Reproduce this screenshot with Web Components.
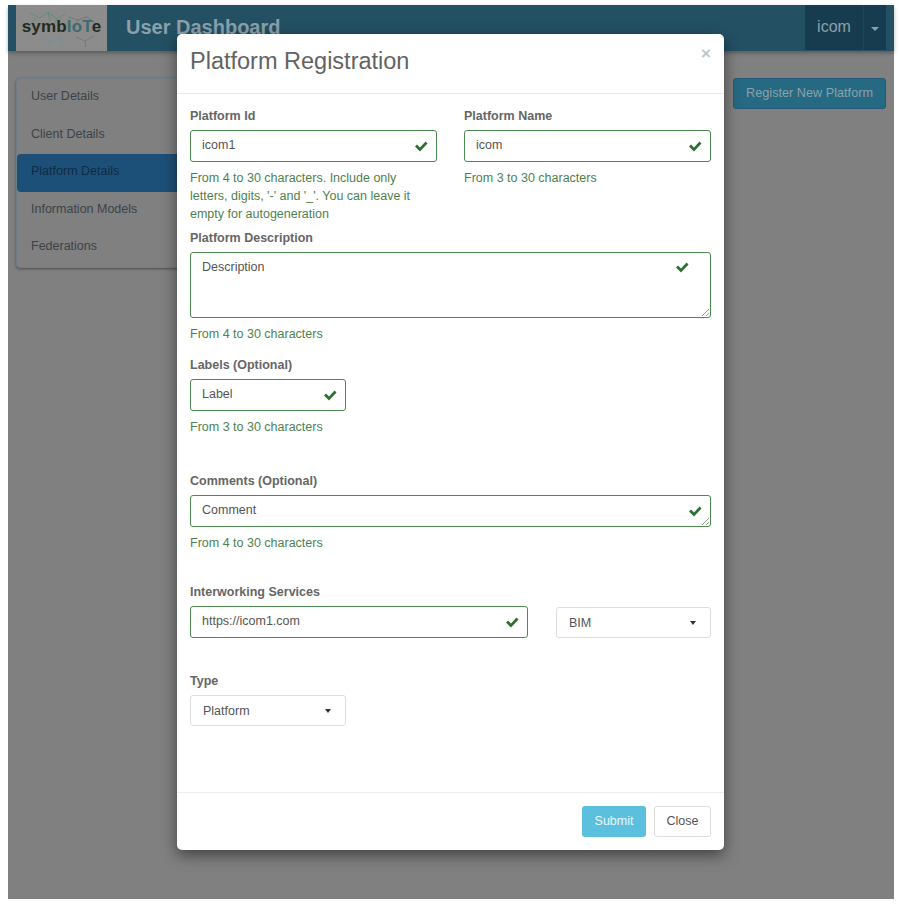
<!DOCTYPE html>
<html>
<head>
<meta charset="utf-8">
<style>
    html, body { margin: 0; padding: 0; background: #fff; }
    body { font-family: "Liberation Sans", Arial, sans-serif; }
</style>
</head>
<body>
<app-shell>
    <top-bar></top-bar>
    <div style="display:flex;justify-content:space-between;align-items:flex-start;padding:27px 8px 0 8px">
        <side-menu>
            <menu-link>User Details</menu-link>
            <menu-link>Client Details</menu-link>
            <menu-link active>Platform Details</menu-link>
            <menu-link>Information Models</menu-link>
            <menu-link>Federations</menu-link>
        </side-menu>
        <register-button>Register New Platform</register-button>
    </div>
    <platform-modal slot="modal">
        <div class="row" style="display:flex;gap:27px;height:122px">
            <form-field label="Platform Id" value="icom1" style="width:247px" help="From 4 to 30 characters. Include only letters, digits, '-' and '_'. You can leave it empty for autogeneration"></form-field>
            <form-field label="Platform Name" value="icom" style="width:247px" help="From 3 to 30 characters"></form-field>
        </div>
        <form-field label="Platform Description" value="Description" multiline height="66" grip help="From 4 to 30 characters" style="margin-bottom:13px"></form-field>
        <form-field label="Labels (Optional)" value="Label" style="width:156px;margin-bottom:36px" help="From 3 to 30 characters"></form-field>
        <form-field label="Comments (Optional)" value="Comment" grip help="From 4 to 30 characters" style="margin-bottom:31px"></form-field>
        <div style="display:flex;gap:28px;align-items:flex-end;margin-bottom:34px">
            <form-field label="Interworking Services" value="https://icom1.com" style="width:338px"></form-field>
            <select-box style="width:155px">BIM</select-box>
        </div>
        <form-field label="Type" style="width:156px">
            <select-box>Platform</select-box>
        </form-field>
    </platform-modal>
</app-shell>

<script>
const shellTemplate = document.createElement("template");
shellTemplate.innerHTML = `
    <style>
        :host {
            display: block;
            position: relative;
            margin: 5px 6px 0 8px;
            height: 894px;
            background: #808080;
        }
    </style>
    <slot></slot>
    <slot name="modal"></slot>
`;
class AppShell extends HTMLElement {
    constructor() {
        super();
        this.attachShadow({ mode: "open" });
        this.shadowRoot.appendChild(shellTemplate.content.cloneNode(true));
    }
}
customElements.define("app-shell", AppShell);

const barTemplate = document.createElement("template");
barTemplate.innerHTML = `
    <style>
        :host {
            display: flex;
            align-items: stretch;
            height: 46px;
            background: #245064;
            box-shadow: 0 2px 4px rgba(0,0,0,.3);
            padding: 0 8px;
        }
        .logo {
            width: 91px;
            background: #8c8c8c;
            display: flex;
            align-items: center;
            justify-content: center;
            position: relative;
            overflow: hidden;
        }
        .logo svg { position: absolute; left: 0; top: 0; }
        .logo b {
            position: relative;
            font-size: 17px;
            letter-spacing: .2px;
            color: #232a20;
            margin-top: -3px;
        }
        .logo b span { color: #3f6a70; }
        h1 {
            margin: 0 0 0 19px;
            font-size: 20px;
            line-height: 44px;
            font-weight: bold;
            color: #8aa1ac;
            flex: 1;
        }
        .user {
            display: flex;
            height: 45px;
            color: #8aa1ac;
            background: #183c4f;
        }
        .name {
            width: 58px;
            text-align: center;
            line-height: 43px;
            font-size: 16px;
            border-right: 1px solid #204558;
        }
        .caret {
            width: 22px;
            display: flex;
            align-items: center;
            justify-content: center;
        }
        .caret i {
            border-top: 4px solid #8aa1ac;
            border-left: 4px solid transparent;
            border-right: 4px solid transparent;
            margin-top: 2px;
        }
    </style>
    <div class="logo">
        <svg width="91" height="46" viewBox="0 0 91 46" fill="none" stroke-width="1">
            <g stroke="#5f8f6f"><path d="M14 8l10 5 8-6 9 7 8-5M20 13l-6 7M32 7l2 9M41 14l-3 6"/></g>
            <g stroke="#6f8fa0"><path d="M26 33l9 4 8-5 7 5M35 37l-2 6M43 32l3 8"/></g>
            <g stroke="#777"><path d="M52 12l10 3 9-3 8 6M62 15l-3 7M60 32l9 4 9-5M69 36l1 6"/></g>
        </svg>
        <b>symb<span>IoT</span>e</b>
    </div>
    <h1>User Dashboard</h1>
    <div class="user">
        <div class="name">icom</div>
        <div class="caret"><i></i></div>
    </div>
`;
class TopBar extends HTMLElement {
    constructor() {
        super();
        this.attachShadow({ mode: "open" });
        this.shadowRoot.appendChild(barTemplate.content.cloneNode(true));
    }
}
customElements.define("top-bar", TopBar);

const menuTemplate = document.createElement("template");
menuTemplate.innerHTML = `
    <style>
        :host {
            display: block;
            width: 240px;
            background: #808080;
            border: 1px solid #6d7e88;
            border-radius: 4px;
            box-shadow: 0 1px 3px rgba(0,0,0,.4);
            padding: 0;
        }
    </style>
    <slot></slot>
`;
class SideMenu extends HTMLElement {
    constructor() {
        super();
        this.attachShadow({ mode: "open" });
        this.shadowRoot.appendChild(menuTemplate.content.cloneNode(true));
    }
}
customElements.define("side-menu", SideMenu);

const linkTemplate = document.createElement("template");
linkTemplate.innerHTML = `
    <style>
        :host {
            display: block;
            height: 37.6px;
            line-height: 35px;
            padding-left: 14px;
            font-size: 12.5px;
            color: #3c4347;
            border-radius: 4px;
        }
        :host([active]) {
            background: #1d5079;
            color: #0f2c42;
        }
    </style>
    <slot></slot>
`;
class MenuLink extends HTMLElement {
    constructor() {
        super();
        this.attachShadow({ mode: "open" });
        this.shadowRoot.appendChild(linkTemplate.content.cloneNode(true));
    }
}
customElements.define("menu-link", MenuLink);

const registerTemplate = document.createElement("template");
registerTemplate.innerHTML = `
    <style>
        :host {
            display: block;
            height: 29px;
            margin-right: 0;
            padding: 0 12px;
            line-height: 29px;
            font-size: 12.7px;
            color: #8aa1ac;
            background: #256a82;
            border: 1px solid #24587a;
            border-radius: 3px;
        }
    </style>
    <slot></slot>
`;
class RegisterButton extends HTMLElement {
    constructor() {
        super();
        this.attachShadow({ mode: "open" });
        this.shadowRoot.appendChild(registerTemplate.content.cloneNode(true));
    }
}
customElements.define("register-button", RegisterButton);

const modalTemplate = document.createElement("template");
modalTemplate.innerHTML = `
    <style>
        :host {
            display: flex;
            flex-direction: column;
            position: absolute;
            left: 169px;
            top: 29px;
            width: 547px;
            height: 816px;
            background: #fff;
            border-radius: 5px;
            box-shadow: 0 5px 15px rgba(0,0,0,.5);
            color: #555;
        }
        header {
            position: relative;
            height: 59px;
            border-bottom: 1px solid #e9e9e9;
            padding-left: 13px;
        }
        h2 {
            margin: 0;
            font-size: 23.5px;
            font-weight: normal;
            line-height: 55px;
            color: #636363;
        }
        .x {
            position: absolute;
            right: 13px;
            top: 10px;
            font-size: 17px;
            font-weight: bold;
            color: #c4c4c4;
        }
        main {
            flex: 1;
            padding: 13px 13px 0 13px;
        }
        footer {
            height: 57px;
            border-top: 1px solid #eee;
            display: flex;
            justify-content: flex-end;
            align-items: center;
            gap: 8px;
            padding: 0 13px;
        }
        .btn {
            height: 29px;
            line-height: 29px;
            border-radius: 3px;
            font-size: 12.5px;
            text-align: center;
            box-sizing: content-box;
        }
        .submit { width: 64px; height: 31px; line-height: 31px; background: #5bc0de; color: #e9f7fb; }
        .close { width: 55px; color: #555; border: 1px solid #ddd; }
    </style>
    <header>
        <h2>Platform Registration</h2>
        <span class="x">×</span>
    </header>
    <main><slot></slot></main>
    <footer>
        <span class="btn submit">Submit</span>
        <span class="btn close">Close</span>
    </footer>
`;
class PlatformModal extends HTMLElement {
    constructor() {
        super();
        this.attachShadow({ mode: "open" });
        this.shadowRoot.appendChild(modalTemplate.content.cloneNode(true));
    }
}
customElements.define("platform-modal", PlatformModal);

const fieldTemplate = document.createElement("template");
fieldTemplate.innerHTML = `
    <style>
        :host {
            display: block;
            font-size: 12.5px;
        }
        label {
            display: block;
            font-weight: bold;
            color: #666;
            line-height: 18px;
            margin-bottom: 5px;
        }
        .input {
            position: relative;
            box-sizing: border-box;
            height: 32px;
            border: 1px solid #4d8a4f;
            border-radius: 3px;
            padding: 0 11px;
            line-height: 29px;
            color: #555;
            background: #fff;
        }
        .input svg.ok {
            position: absolute;
            right: 8px;
            top: 9px;
        }
        :host([multiline]) .input svg.ok { top: 8px; right: 21px; }
        .grip { position: absolute; right: 0; bottom: 0; }
        p {
            margin: 7px 0 0;
            line-height: 18px;
            color: #4e8250;
        }
        p:empty { display: none; }
    </style>
    <label></label>
    <slot>
        <div class="input">
            <span class="val"></span>
            <svg class="ok" width="14" height="12" viewBox="0 0 14 12"><path d="M1 6.5l2-2 3 3 5.5-6 2 2-7.5 8z" fill="#2e7031"/></svg>
        </div>
    </slot>
    <p></p>
`;
class FormField extends HTMLElement {
    constructor() {
        super();
        this.attachShadow({ mode: "open" });
        this.shadowRoot.appendChild(fieldTemplate.content.cloneNode(true));
        const root = this.shadowRoot;
        root.querySelector("label").textContent = this.getAttribute("label");
        root.querySelector(".val").textContent = this.getAttribute("value") || "";
        root.querySelector("p").textContent = this.getAttribute("help") || "";
        if (this.hasAttribute("height")) {
            root.querySelector(".input").style.height = this.getAttribute("height") + "px";
        }
        if (this.hasAttribute("grip")) {
            root.querySelector(".input").insertAdjacentHTML("beforeend",
                '<svg class="grip" width="10" height="10" viewBox="0 0 10 10"><path d="M9 2L2 9M9 6L6 9" stroke="#999" fill="none"/></svg>');
        }
    }
}
customElements.define("form-field", FormField);

const selectTemplate = document.createElement("template");
selectTemplate.innerHTML = `
    <style>
        :host {
            display: flex;
            align-items: center;
            justify-content: space-between;
            box-sizing: border-box;
            height: 31px;
            border: 1px solid #ddd;
            border-radius: 3px;
            padding: 0 14px 0 12px;
            font-size: 12.5px;
            color: #555;
            background: #fff;
        }
        i {
            border-top: 4px solid #333;
            border-left: 3.5px solid transparent;
            border-right: 3.5px solid transparent;
        }
    </style>
    <span><slot></slot></span><i></i>
`;
class SelectBox extends HTMLElement {
    constructor() {
        super();
        this.attachShadow({ mode: "open" });
        this.shadowRoot.appendChild(selectTemplate.content.cloneNode(true));
    }
}
customElements.define("select-box", SelectBox);
</script>
</body>
</html>
